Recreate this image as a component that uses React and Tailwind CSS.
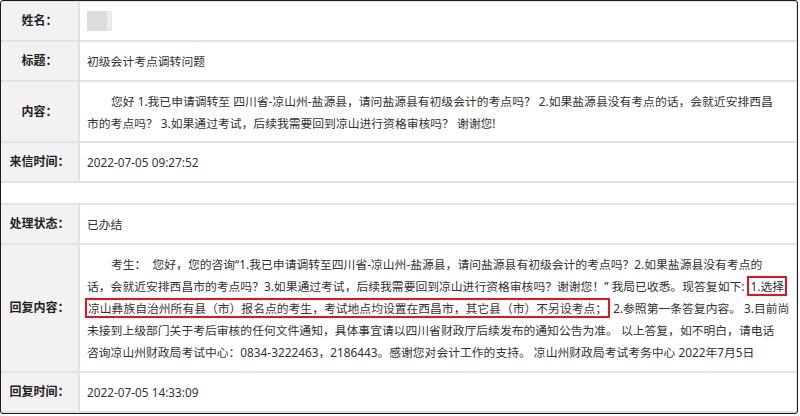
import React from 'react'

const FONT = "font-['Noto_Sans','Noto_Sans_CJK_SC',sans-serif]"

function Label({ children }) {
  return (
    <div className="bg-[#f2f2f2] flex items-center justify-center font-bold text-[12px] text-[#222]">
      {children}
    </div>
  )
}

function Value({ children, className = '' }) {
  return (
    <div className={`bg-white flex items-center px-[7px] text-[11.8px] text-[#333] leading-[22px] ${className}`}>
      {children}
    </div>
  )
}

const RED = 'border-2 border-[#e8141b] px-[1px]'

export default function App() {
  return (
    <div className={`w-[798px] h-[414px] border border-[#1a1a1a] rounded-[3px] bg-[#e3e3e3] pt-[1px] pr-[1px] pb-[2px] ${FONT}`}>
      <div className="grid grid-cols-[77px_1fr] grid-rows-[38px_38px_59px_38px_20px_38px_126px_38px] gap-[2px]">
        <Label>姓名：</Label>
        <Value>
          <div className="flex">
            <div className="w-[20px] h-[20px] bg-[#dcdcdc]" />
            <div className="w-[5px] h-[20px] bg-[#ececec]" />
          </div>
        </Value>

        <Label>标题：</Label>
        <Value>初级会计考点调转问题</Value>

        <Label>内容：</Label>
        <Value>
          <div className="whitespace-nowrap">
            <div className="indent-[24px]">
              您好 1.我已申请调转至 四川省-凉山州-盐源县，请问盐源县有初级会计的考点吗？ 2.如果盐源县没有考点的话，会就近安排西昌
            </div>
            <div>市的考点吗？ 3.如果通过考试，后续我需要回到凉山进行资格审核吗？ 谢谢您!</div>
          </div>
        </Value>

        <Label>来信时间：</Label>
        <Value>2022-07-05 09:27:52</Value>

        <div className="col-span-2 bg-white" />

        <Label>处理状态：</Label>
        <Value>已办结</Value>

        <Label>回复内容：</Label>
        <Value className="!px-[5px]">
          <div className="whitespace-nowrap">
            <div className="pl-[26px]">
              考生：&nbsp; 您好，您的咨询“1.我已申请调转至四川省-凉山州-盐源县，请问盐源县有初级会计的考点吗？2.如果盐源县没有考点的
            </div>
            <div className="pl-[2px]">
              话，会就近安排西昌市的考点吗？3.如果通过考试，后续我需要回到凉山进行资格审核吗？谢谢您！” 我局已收悉。现答复如下: <span className={RED}>1.选择</span>
            </div>
            <div>
              <span className={RED}>凉山彝族自治州所有县（市）报名点的考生，考试地点均设置在西昌市，其它县（市）不另设考点；</span> 2.参照第一条答复内容。 3.目前尚
            </div>
            <div className="pl-[2px]">
              未接到上级部门关于考后审核的任何文件通知，具体事宜请以四川省财政厅后续发布的通知公告为准。 以上答复，如不明白，请电话
            </div>
            <div className="pl-[2px]">
              咨询凉山州财政局考试中心：0834-3222463，2186443。感谢您对会计工作的支持。 凉山州财政局考试考务中心 2022年7月5日
            </div>
          </div>
        </Value>

        <Label>回复时间：</Label>
        <Value>2022-07-05 14:33:09</Value>
      </div>
    </div>
  )
}
